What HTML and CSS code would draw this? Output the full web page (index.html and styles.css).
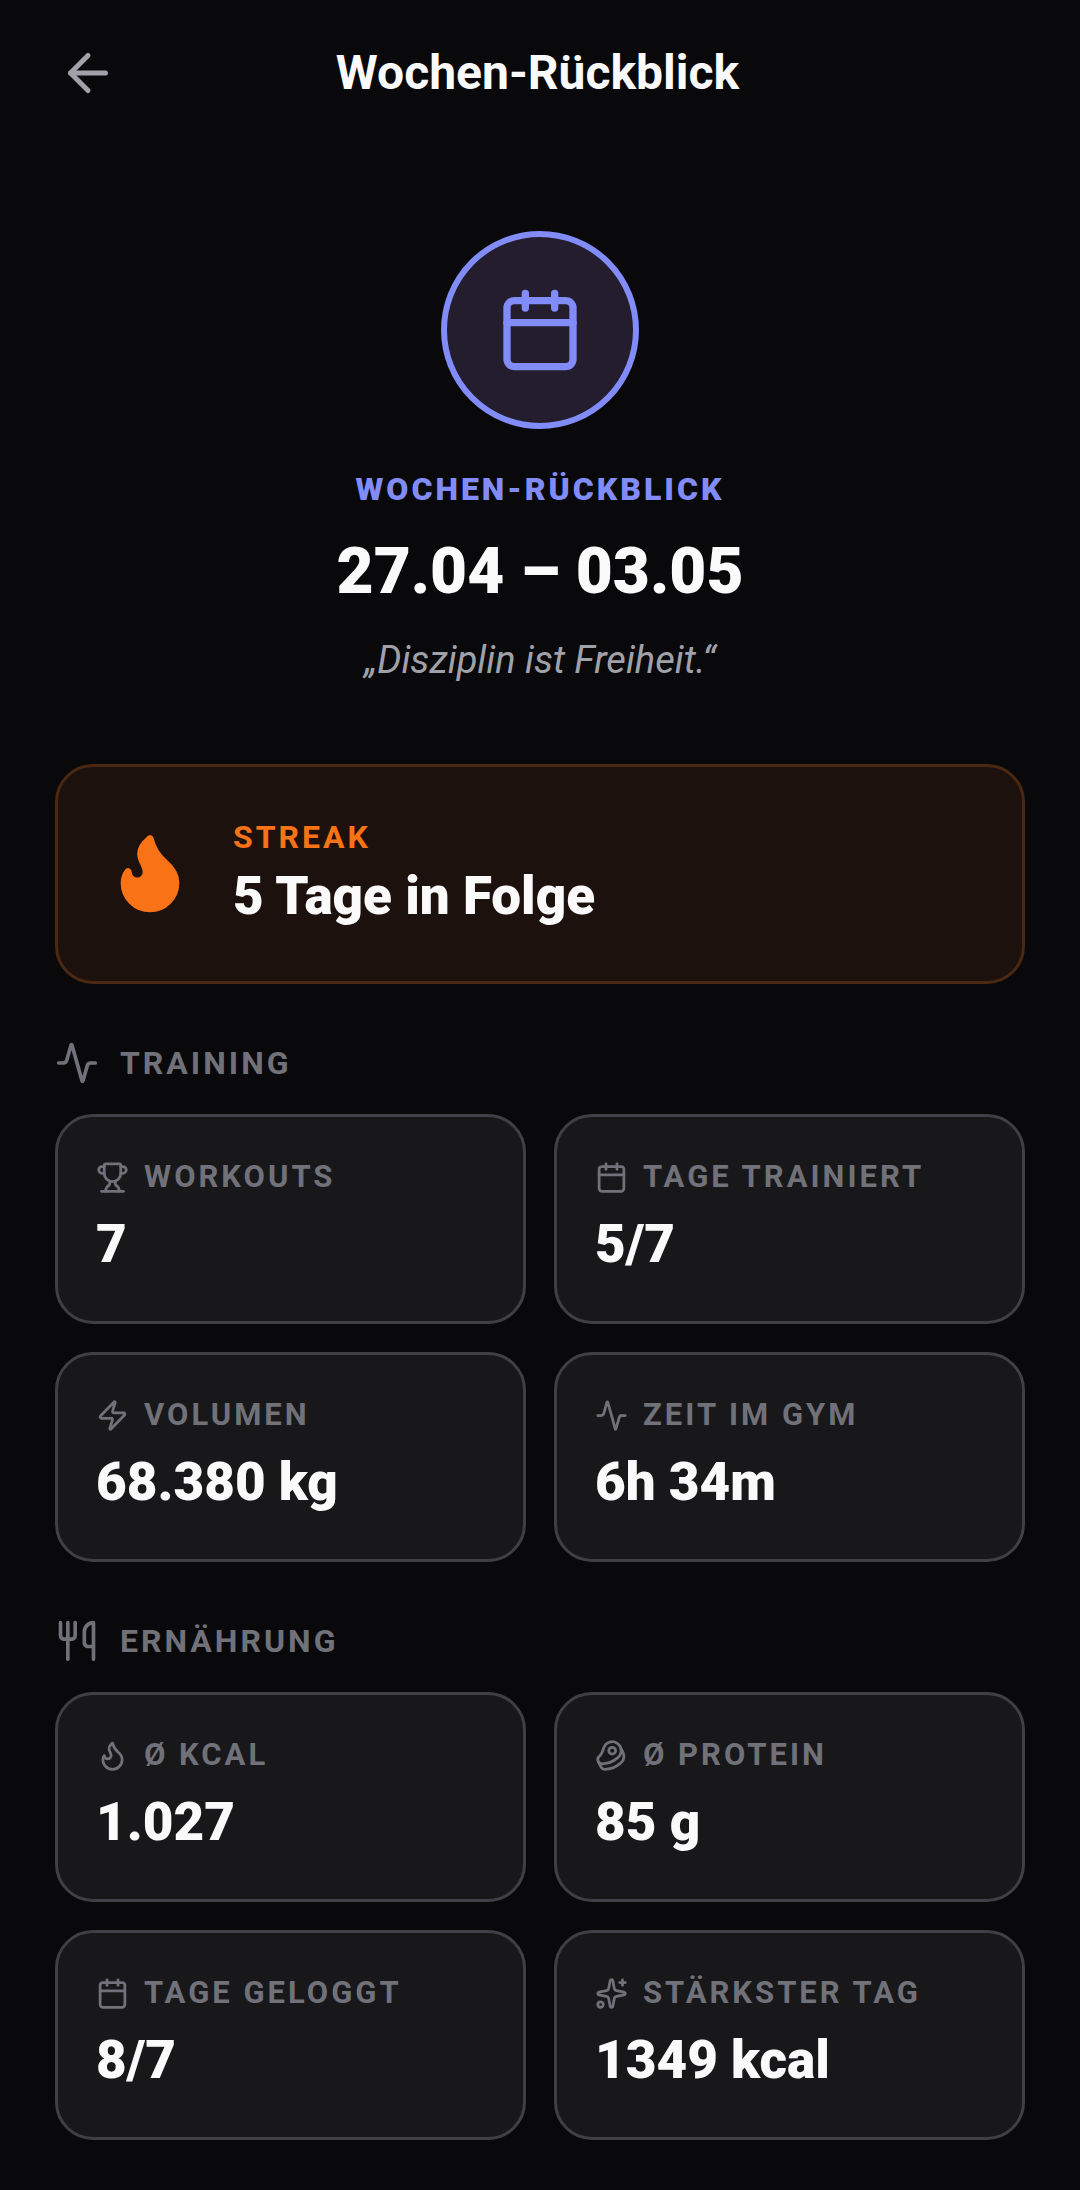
FILE: index.html
```html
<!DOCTYPE html>
<html lang="de">
  <head>
    <meta charset="UTF-8" />
    <meta name="viewport" content="width=device-width, initial-scale=1" />
    <title>Wochen-Rückblick</title>
    <link rel="stylesheet" href="styles.css">
  </head>
  <body>
    <!-- Icons -->
    <svg class="sprite" aria-hidden="true">
      <symbol id="arrow-left" viewBox="0 0 24 24">
        <path d="m12 19-7-7 7-7" />
        <path d="M19 12H5" />
      </symbol>
      <symbol id="calendar" viewBox="0 0 24 24">
        <path d="M8 2v4" />
        <path d="M16 2v4" />
        <rect width="18" height="18" x="3" y="4" rx="2" />
        <path d="M3 10h18" />
      </symbol>
      <symbol id="flame" viewBox="0 0 24 24">
        <path d="M12 3q1 4 4 6.500t3 5.500a1 1 0 0 1-14 0 5 5 0 0 1 1-3 1 1 0 0 0 5 0c0-2-1.500-3-1.500-5q0-2 2.500-4" />
      </symbol>
      <symbol id="activity" viewBox="0 0 24 24">
        <path d="M22 12h-2.480a2 2 0 0 0-1.930 1.460l-2.350 8.360a.25.25 0 0 1-.48 0L9.240 2.180a.25.25 0 0 0-.48 0l-2.350 8.360A2 2 0 0 1 4.490 12H2" />
      </symbol>
      <symbol id="trophy" viewBox="0 0 24 24">
        <path d="M10 14.660v1.626a2 2 0 0 1-.976 1.696A5 5 0 0 0 7 21.978" />
        <path d="M14 14.660v1.626a2 2 0 0 0 .976 1.696A5 5 0 0 1 17 21.978" />
        <path d="M18 9h1.500a1 1 0 0 0 0-5H18" />
        <path d="M4 22h16" />
        <path d="M6 9a6 6 0 0 0 12 0V3a1 1 0 0 0-1-1H7a1 1 0 0 0-1 1z" />
        <path d="M6 9H4.500a1 1 0 0 1 0-5H6" />
      </symbol>
      <symbol id="zap" viewBox="0 0 24 24">
        <path d="M4 14a1 1 0 0 1-.78-1.630l9.900-10.200a.5.5 0 0 1 .86.46l-1.920 6.020A1 1 0 0 0 13 10h7a1 1 0 0 1 .78 1.630l-9.900 10.200a.5.5 0 0 1-.86-.46l1.920-6.020A1 1 0 0 0 11 14z" />
      </symbol>
      <symbol id="utensils" viewBox="0 0 24 24">
        <path d="M3 2v7c0 1.100.9 2 2 2h4a2 2 0 0 0 2-2V2" />
        <path d="M7 2v20" />
        <path d="M21 15V2a5 5 0 0 0-5 5v6c0 1.100.9 2 2 2h3Zm0 0v7" />
      </symbol>
      <symbol id="beef" viewBox="0 0 24 24">
        <path d="M16.400 13.700A6.500 6.500 0 1 0 6.280 6.600c-1.100 3.130-.78 3.900-3.180 6.080A3 3 0 0 0 5 18c4 0 8.400-1.800 11.400-4.300" />
        <path d="m18.500 6 2.190 4.500a6.480 6.480 0 0 1-2.290 7.200C15.400 20.200 11 22 7 22a3 3 0 0 1-2.680-1.660L2.400 16.500" />
        <circle cx="12.5" cy="8.5" r="2.5" />
      </symbol>
      <symbol id="sparkles" viewBox="0 0 24 24">
        <path d="M11.017 2.814a1 1 0 0 1 1.966 0l1.051 5.558a2 2 0 0 0 1.594 1.594l5.558 1.051a1 1 0 0 1 0 1.966l-5.558 1.051a2 2 0 0 0-1.594 1.594l-1.051 5.558a1 1 0 0 1-1.966 0l-1.051-5.558a2 2 0 0 0-1.594-1.594l-5.558-1.051a1 1 0 0 1 0-1.966l5.558-1.051a2 2 0 0 0 1.594-1.594z" />
        <path d="M20 2v4" />
        <path d="M22 4h-4" />
        <circle cx="4" cy="20" r="2" />
      </symbol>
    </svg>

    <header class="topbar">
      <button class="back" type="button" aria-label="Zurück">
        <svg class="icon"><use href="#arrow-left" /></svg>
      </button>
      <h1 class="topbar-title">Wochen-Rückblick</h1>
    </header>

    <main class="content">
      <section class="hero">
        <div class="hero-badge">
          <svg class="icon icon-lg"><use href="#calendar" /></svg>
        </div>
        <p class="hero-label">WOCHEN-RÜCKBLICK</p>
        <h2 class="hero-date">27.04 – 03.05</h2>
        <p class="hero-quote">„Disziplin ist Freiheit.“</p>
      </section>

      <section class="streak">
        <svg class="icon icon-lg streak-icon"><use href="#flame" /></svg>
        <div>
          <p class="streak-label">STREAK</p>
          <p class="value">5 Tage in Folge</p>
        </div>
      </section>

      <section class="section">
        <h3 class="section-title">
          <svg class="icon icon-md"><use href="#activity" /></svg>
          TRAINING
        </h3>
        <div class="grid">
          <div class="card">
            <p class="card-label"><svg class="icon icon-sm"><use href="#trophy" /></svg>WORKOUTS</p>
            <p class="value">7</p>
          </div>
          <div class="card">
            <p class="card-label"><svg class="icon icon-sm"><use href="#calendar" /></svg>TAGE TRAINIERT</p>
            <p class="value">5/7</p>
          </div>
          <div class="card">
            <p class="card-label"><svg class="icon icon-sm"><use href="#zap" /></svg>VOLUMEN</p>
            <p class="value">68.380 kg</p>
          </div>
          <div class="card">
            <p class="card-label"><svg class="icon icon-sm"><use href="#activity" /></svg>ZEIT IM GYM</p>
            <p class="value">6h 34m</p>
          </div>
        </div>
      </section>

      <section class="section">
        <h3 class="section-title">
          <svg class="icon icon-md"><use href="#utensils" /></svg>
          ERNÄHRUNG
        </h3>
        <div class="grid">
          <div class="card">
            <p class="card-label"><svg class="icon icon-sm"><use href="#flame" /></svg>Ø KCAL</p>
            <p class="value">1.027</p>
          </div>
          <div class="card">
            <p class="card-label"><svg class="icon icon-sm"><use href="#beef" /></svg>Ø PROTEIN</p>
            <p class="value">85 g</p>
          </div>
          <div class="card">
            <p class="card-label"><svg class="icon icon-sm"><use href="#calendar" /></svg>TAGE GELOGGT</p>
            <p class="value">8/7</p>
          </div>
          <div class="card">
            <p class="card-label"><svg class="icon icon-sm"><use href="#sparkles" /></svg>STÄRKSTER TAG</p>
            <p class="value">1349 kcal</p>
          </div>
        </div>
      </section>
    </main>
  </body>
</html>
```
FILE: styles.css
```css
* {
  box-sizing: border-box;
}
body {
  margin: 0;
  background: #09090b;
  color: #fafafa;
  font-family: Roboto, "Liberation Sans", sans-serif;
}
h1,
h2,
h3,
p {
  margin: 0;
}

/* icons */
.sprite {
  display: none;
}
.icon {
  flex-shrink: 0;
  width: 60px;
  height: 60px;
  fill: none;
  stroke: currentColor;
  stroke-width: 2;
  stroke-linecap: round;
  stroke-linejoin: round;
}
.icon-sm {
  width: 33px;
  height: 33px;
}
.icon-md {
  width: 44px;
  height: 44px;
}
.icon-lg {
  width: 88px;
  height: 88px;
}

/* top bar */
.topbar {
  display: grid;
  grid-template-columns: 110px 1fr 110px;
  align-items: center;
  padding: 18px 38px 18px 33px;
}
.back {
  display: flex;
  align-items: center;
  justify-content: center;
  height: 110px;
  padding: 0;
  border: 0;
  background: none;
  color: #a1a1aa;
  cursor: pointer;
}
.topbar-title {
  font-size: 48px;
  font-weight: 700;
  line-height: 60px;
  text-align: center;
}

.content {
  padding: 85px 55px 50px;
}

/* hero */
.hero {
  display: flex;
  flex-direction: column;
  align-items: center;
  text-align: center;
}
.hero-badge {
  display: flex;
  align-items: center;
  justify-content: center;
  width: 198px;
  height: 198px;
  border: 6px solid #818cf8;
  border-radius: 50%;
  background: #231d2e;
  color: #818cf8;
}
.hero-label {
  margin-top: 39px;
  color: #818cf8;
  font-size: 32px;
  font-weight: 900;
  line-height: 42px;
  letter-spacing: 3px;
}
.hero-date {
  margin-top: 24px;
  font-size: 64px;
  font-weight: 900;
  line-height: 76px;
}
.hero-quote {
  margin-top: 25px;
  color: #a1a1aa;
  font-size: 38px;
  font-style: italic;
  line-height: 50px;
}

/* streak */
.streak {
  display: flex;
  align-items: center;
  gap: 39px;
  margin-top: 79px;
  padding: 49px 48px 53px;
  border: 3px solid #4a2812;
  border-radius: 38px;
  background: #1c110d;
}
.streak-icon {
  color: #f97316;
  fill: currentColor;
}
.streak-label {
  margin-bottom: 6px;
  color: #f97316;
  font-size: 32px;
  font-weight: 700;
  line-height: 42px;
  letter-spacing: 3px;
}
.value {
  font-size: 53px;
  font-weight: 900;
  line-height: 64px;
}

/* stat sections */
.section {
  margin-top: 57px;
}
.section-title {
  display: flex;
  align-items: center;
  gap: 21px;
  margin-bottom: 29px;
  color: #71717a;
  font-size: 32px;
  font-weight: 700;
  line-height: 44px;
  letter-spacing: 3px;
}
.grid {
  display: grid;
  grid-template-columns: 1fr 1fr;
  gap: 28px;
}
.card {
  min-height: 210px;
  padding: 39px 38px;
  border: 3px solid #3f3f46;
  border-radius: 38px;
  background: #18181b;
}
.card-label {
  display: flex;
  align-items: center;
  gap: 15px;
  margin-bottom: 14px;
  color: #71717a;
  font-size: 31px;
  font-weight: 700;
  line-height: 42px;
  letter-spacing: 3px;
}
```
